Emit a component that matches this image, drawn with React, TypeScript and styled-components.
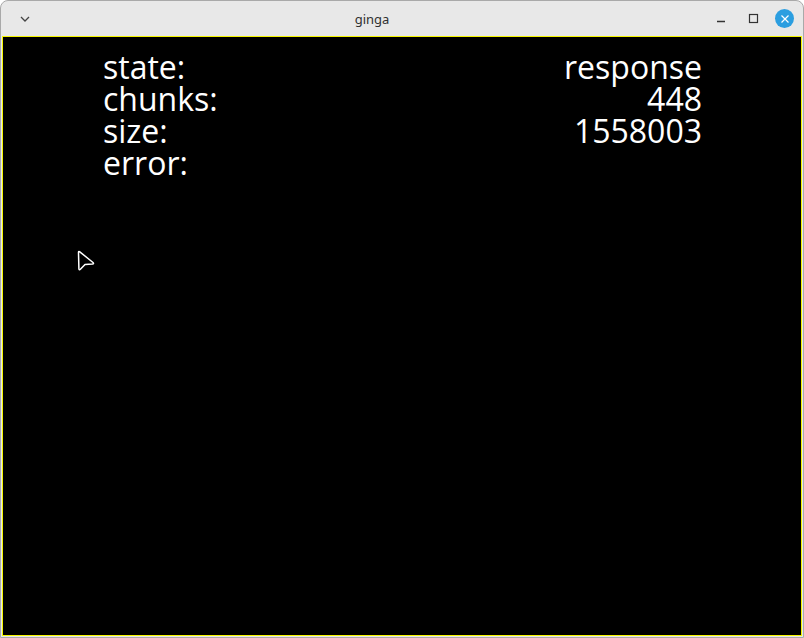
import React from "react";
import styled, { createGlobalStyle } from "styled-components";

const Global = createGlobalStyle`
  html, body { margin: 0; padding: 0; background: #ffffff; }
  body { width: 804px; height: 638px; overflow: hidden; }
`;

const Window = styled.div`
  box-sizing: border-box;
  width: 804px;
  height: 638px;
  border: 1px solid #a9a9a9;
  border-radius: 8px 8px 0 0;
  background: #e8e8e8;
  display: flex;
  flex-direction: column;
  overflow: hidden;
  position: relative;
`;

const TitleBar = styled.div`
  height: 35px;
  display: flex;
  align-items: center;
  position: relative;
  flex-shrink: 0;
`;

const Title = styled.div`
  position: absolute;
  left: 0;
  right: 60px;
  text-align: center;
  font-family: "Noto Sans", "Open Sans", sans-serif;
  font-size: 13px;
  color: #303030;
  top: 9px;
`;

const MenuBtn = styled.div`
  width: 16px;
  height: 16px;
  margin-left: 16px;
  display: flex;
  align-items: center;
  justify-content: center;
`;

const Controls = styled.div`
  margin-left: auto;
  margin-right: 9px;
  display: flex;
  align-items: center;
  gap: 13px;
`;

const CtlBtn = styled.div<{ $close?: boolean }>`
  width: 19px;
  height: 19px;
  border-radius: 50%;
  background: ${(p) => (p.$close ? "#2b9ee0" : "transparent")};
  display: flex;
  align-items: center;
  justify-content: center;
`;

const Content = styled.div`
  flex: 1;
  margin: 0 1px 1px 1px;
  border: 1px solid #f5f500;
  background: #000;
  position: relative;
  padding: 14px 99px 0 100px;
  font-family: "Open Sans", "Noto Sans", sans-serif;
  font-size: 32px;
  line-height: 32px;
  color: #ffffff;
`;

const Row = styled.div`
  display: flex;
  justify-content: space-between;
`;

const Cursor = styled.svg`
  position: absolute;
  left: 71px;
  top: 211px;
`;

const rows: [string, string][] = [
  ["state:", "response"],
  ["chunks:", "448"],
  ["size:", "1558003"],
  ["error:", ""],
];

export default function App() {
  return (
    <>
      <Global />
      <Window>
        <TitleBar>
          <MenuBtn>
            <svg width="12" height="8" viewBox="0 0 12 8">
              <path d="M2 2 L6 6 L10 2" fill="none" stroke="#444" strokeWidth="1.3" />
            </svg>
          </MenuBtn>
          <Title>ginga</Title>
          <Controls>
            <CtlBtn>
              <svg width="12" height="12" viewBox="0 0 12 12">
                <path d="M2 8.5 H10" stroke="#333" strokeWidth="1.3" />
              </svg>
            </CtlBtn>
            <CtlBtn>
              <svg width="12" height="12" viewBox="0 0 12 12">
                <rect x="2.5" y="1.5" width="8" height="8" fill="none" stroke="#333" strokeWidth="1.2" />
              </svg>
            </CtlBtn>
            <CtlBtn $close>
              <svg width="10" height="10" viewBox="0 0 10 10">
                <path d="M1.5 1.5 L8.5 8.5 M8.5 1.5 L1.5 8.5" stroke="#fff" strokeWidth="1.2" />
              </svg>
            </CtlBtn>
          </Controls>
        </TitleBar>
        <Content>
          {rows.map(([k, v]) => (
            <Row key={k}>
              <span>{k}</span>
              <span>{v}</span>
            </Row>
          ))}
          <Cursor width="24" height="26" viewBox="0 0 24 26">
            <path
              d="M5.5 3.6 Q4.5 3 4.5 4.5 L4.9 20.8 Q5.2 22.4 6.4 21.3 L11 16.6 L18.5 16 Q20.2 15.7 19 14.5 Z"
              fill="#000"
              stroke="#fff"
              strokeWidth="1.5"
              strokeLinejoin="round"
            />
          </Cursor>
        </Content>
      </Window>
    </>
  );
}
